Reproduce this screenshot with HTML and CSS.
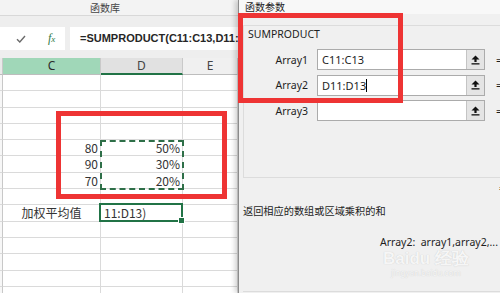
FILE: index.html
```html
<!DOCTYPE html>
<html lang="zh">
<head>
    <meta charset="UTF-8">
    <title>函数参数 - SUMPRODUCT</title>
    <link rel="stylesheet" href="styles.css">
</head>
<body>

<div class="excel">
    <div class="ribbon">函数库</div>
    <div class="fbar-area">
        <div class="fbar">
            <div class="fbar-btns">
                <svg class="check" width="10" height="8" viewBox="0 0 10 8"><path d="M1 4.2 L3.8 7 L9 1" fill="none" stroke="#6b6b6b" stroke-width="1.4"/></svg>
                <span class="fx">f<small>x</small></span>
            </div>
            <div class="fbar-input">=SUMPRODUCT(C11:C13,D11:D13)</div>
        </div>
    </div>
    <div class="sheet">
        <div class="hd stub"></div><div class="hd col-c">C</div><div class="hd col-d">D</div><div class="hd">E</div>

        <div class="stub"></div><div class="cell"></div><div class="cell"></div><div class="cell"></div>
        <div class="stub"></div><div class="cell"></div><div class="cell"></div><div class="cell"></div>
        <div class="stub"></div><div class="cell"></div><div class="cell"></div><div class="cell"></div>
        <div class="stub"></div><div class="cell"></div><div class="cell"></div><div class="cell"></div>
        <div class="stub"></div><div class="cell num">80</div><div class="cell num">50%</div><div class="cell"></div>
        <div class="stub"></div><div class="cell num">90</div><div class="cell num">30%</div><div class="cell"></div>
        <div class="stub"></div><div class="cell num">70</div><div class="cell num">20%</div><div class="cell"></div>
        <div class="stub"></div><div class="cell"></div><div class="cell"></div><div class="cell"></div>
        <div class="stub"></div><div class="cell label">加权平均值</div><div class="cell active">11:D13)</div><div class="cell"></div>
        <div class="stub"></div><div class="cell"></div><div class="cell"></div><div class="cell"></div>
        <div class="stub"></div><div class="cell"></div><div class="cell"></div><div class="cell"></div>
        <div class="stub"></div><div class="cell"></div><div class="cell"></div><div class="cell"></div>
        <div class="stub"></div><div class="cell"></div><div class="cell"></div><div class="cell"></div>
        <div class="stub"></div><div class="cell"></div><div class="cell"></div><div class="cell"></div>

        <div class="range"></div>
    </div>
</div>

<div class="dialog">
    <div class="dlg-title">函数参数</div>
    <div class="dlg-body">
        <div class="args">
            <div class="args-title">SUMPRODUCT</div>
            <div class="arg">
                <span class="arg-name">Array1</span>
                <div class="arg-box"><span class="arg-val">C11:C13</span><span class="pick"><svg width="9" height="10" viewBox="0 0 9 10"><path d="M4.5 0.5 L8.5 4.5 L5.6 4.5 L5.6 7 L3.4 7 L3.4 4.5 L0.5 4.5 Z" fill="#111"/><rect x="0.5" y="8.2" width="8" height="1.3" fill="#111"/></svg></span></div>
                <span class="eq">=</span>
            </div>
            <div class="arg">
                <span class="arg-name">Array2</span>
                <div class="arg-box"><span class="arg-val">D11:D13<i class="caret"></i></span><span class="pick"><svg width="9" height="10" viewBox="0 0 9 10"><path d="M4.5 0.5 L8.5 4.5 L5.6 4.5 L5.6 7 L3.4 7 L3.4 4.5 L0.5 4.5 Z" fill="#111"/><rect x="0.5" y="8.2" width="8" height="1.3" fill="#111"/></svg></span></div>
                <span class="eq">=</span>
            </div>
            <div class="arg">
                <span class="arg-name">Array3</span>
                <div class="arg-box"><span class="arg-val"></span><span class="pick"><svg width="9" height="10" viewBox="0 0 9 10"><path d="M4.5 0.5 L8.5 4.5 L5.6 4.5 L5.6 7 L3.4 7 L3.4 4.5 L0.5 4.5 Z" fill="#111"/><rect x="0.5" y="8.2" width="8" height="1.3" fill="#111"/></svg></span></div>
                <span class="eq">=</span>
            </div>
        </div>
        <div class="result">=</div>
        <p class="desc">返回相应的数组或区域乘积的和</p>
        <p class="arg-help">Array2:&nbsp;&nbsp;array1,array2,...</p>
        <div class="dlg-line"></div>
    </div>
    <div class="watermark">
        <span class="wm-logo">Bai<b>du</b> 经验</span>
        <span class="wm-url">jingyan.baidu.com</span>
    </div>
</div>

<div class="mark mark-sheet"></div>
<div class="mark mark-dialog"></div>

</body>
</html>
```

FILE: styles.css
```css
body { margin: 0; width: 500px; height: 293px; overflow: hidden; position: relative; display: flex; background: #f3f3f3; font-family: "Noto Sans", "Noto Sans CJK SC", sans-serif; color: #222; }

/* excel side */
.excel { width: 238px; flex: none; display: flex; flex-direction: column; background: #f3f3f3; }
.ribbon { height: 15px; line-height: 15px; border-bottom: 1px solid #d8d8d8; padding-left: 90px; font-size: 10px; color: #444; font-family: "Noto Sans CJK SC", sans-serif; }
.fbar-area { padding: 11px 0 8px; background: #eeeeee; }
.fbar { display: flex; height: 23px; gap: 5px; }
.fbar-btns { width: 65px; background: #fff; display: flex; align-items: center; }
.check { margin-left: 16px; }
.fx { margin-left: 22px; font-family: "Liberation Serif", serif; font-style: italic; font-size: 12px; color: #2f7a47; }
.fx small { font-size: 9px; }
.fbar-input { flex: 1; background: #fff; padding-left: 10px; line-height: 23px; font-family: "Liberation Sans", sans-serif; font-weight: bold; font-size: 11px; color: #262626; white-space: nowrap; overflow: hidden; }

.sheet { flex: 1; display: grid; grid-template-columns: 3px 98px 82px 55px; grid-template-rows: 17px; grid-auto-rows: 16.3px; background: #fff; position: relative; font-family: "Noto Sans CJK SC", sans-serif; font-size: 12px; color: #333; }
.sheet > div { box-sizing: border-box; border-right: 1px solid #dadada; border-bottom: 1px solid #dadada; }
.stub { background: #f7f7f7; border-right-color: #c8c8c8 !important; }
.hd { background: #f0f0f0; text-align: center; line-height: 16px; font-family: "Noto Sans", sans-serif; color: #444; border-right-color: #c9c9c9 !important; border-bottom-color: #bdbdbd !important; }
.hd.stub { background: #e9e9e9; }
.hd.col-c { background: #a0d7b8; color: #2b2b2b; }
.hd.col-d { background: #e1e1e1; border-bottom: 2px solid #217346 !important; }
.cell { line-height: 15px; padding: 0 2px; white-space: nowrap; }
.cell.num { text-align: right; }
.cell.label { text-align: center; }
.cell.active { position: relative; padding-left: 3px; }
.cell.active::after { content: ""; position: absolute; left: -2px; top: -2px; right: -1px; bottom: -1px; border: 2px solid #217346; }
.cell.active::before { content: ""; position: absolute; right: -3px; bottom: -3px; width: 5px; height: 5px; background: #217346; border: 1px solid #fff; z-index: 1; }
.range { position: absolute; left: 100px; top: 82px; width: 84px; height: 50px; box-sizing: border-box; border: 2px dashed #2e6f48 !important; }

/* dialog */
.dialog { flex: 1; position: relative; background: #f0f0f0; border-left: 1px solid #8c8c8c; box-shadow: -3px 0 5px rgba(0,0,0,0.18); font-size: 10.5px; color: #1e1e1e; }
.dlg-title { height: 14px; line-height: 13px; padding-left: 6px; background: #f8f8f8; font-family: "Noto Sans CJK SC", sans-serif; font-size: 10px; }
.dlg-body { padding: 11px 0 0 4px; }
.args { width: 300px; height: 153px; box-sizing: border-box; border: 1px solid #dcdcdc; border-right: none; }
.args-title { padding-left: 4px; margin-top: 1px; line-height: 14px; }
.arg { display: flex; align-items: center; height: 21px; margin-top: 4.5px; }
.args-title + .arg { margin-top: 8px; }
.arg-name { width: 64px; text-align: right; }
.arg-box { margin-left: 9px; width: 168px; height: 21px; box-sizing: border-box; display: flex; background: #fff; border: 1px solid #ababab; }
.arg-val { flex: 1; padding-left: 4px; line-height: 19px; font-size: 11px; }
.caret { display: inline-block; width: 1px; height: 13px; background: #000; vertical-align: -2px; }
.pick { width: 17px; background: #e4e4e4; border-left: 1px solid #c4c4c4; display: flex; align-items: center; justify-content: center; }
.eq { margin-left: 11px; }
.result { text-align: right; margin-top: 3px; line-height: 14px; width: 262px; }
.desc { margin: 9px 0 0; line-height: 14px; font-family: "Noto Sans CJK SC", sans-serif; font-size: 10.2px; }
.arg-help { margin: 17px 0 0 137px; line-height: 14px; white-space: nowrap; }
.dlg-line { margin-top: 42px; height: 1px; background: #dcdcdc; }
.watermark { position: absolute; left: 144px; top: 250px; display: flex; flex-direction: column; align-items: center; color: #f6f6f6; text-shadow: 0 0 1px #c4c4c4; pointer-events: none; }
.wm-logo { font-family: "Liberation Sans", sans-serif; font-weight: bold; font-size: 17px; line-height: 18px; }
.wm-url { font-size: 8px; line-height: 10px; }

/* red annotation boxes */
.mark { position: absolute; box-sizing: border-box; border: 5px solid #ee3434; }
.mark-sheet { left: 56px; top: 111px; width: 171px; height: 88px; }
.mark-dialog { left: 238px; top: 13px; width: 165px; height: 90px; border-width: 5.5px; }
```
